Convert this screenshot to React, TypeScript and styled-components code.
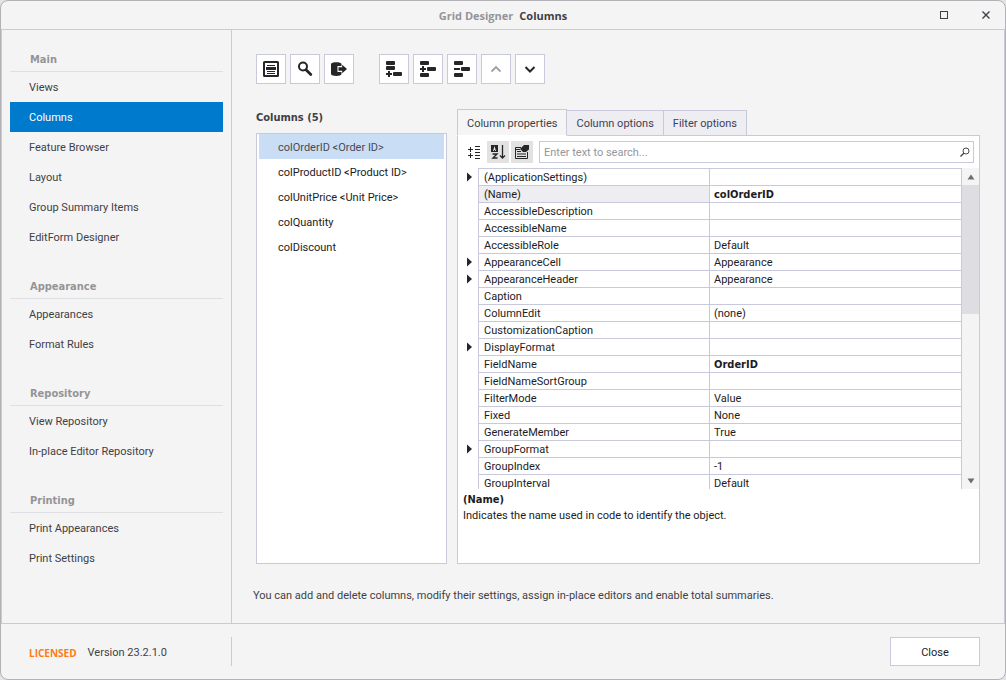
import React, { useState } from "react";
import styled, { createGlobalStyle, css } from "styled-components";

const line = "#c9c9dc";
const ink = "#262626";
const boldFont = `Tahoma, "DejaVu Sans Condensed", sans-serif`;

const GlobalStyle = createGlobalStyle`
  *, *::before, *::after { box-sizing: border-box; }
  body { margin: 0; background: #e4e4e4; }
  body, button, input, table { font: 11px/14px Tahoma, Roboto, sans-serif; color: #1c1c24; }
  ul { list-style: none; margin: 0; padding: 0; }
  h1, h2, h3, p { margin: 0; font-size: 11px; }
  h2, h3 { font-family: ${boldFont}; }
  button { padding: 0; cursor: pointer; }
`;

const Window = styled.div`
  display: flex;
  flex-direction: column;
  height: 100vh;
  min-height: 480px;
  background: #f4f4f4;
  border: 1px solid #b2b2b6;
  border-radius: 8px;
  overflow: hidden;
`;

const TitleBar = styled.header`
  display: grid;
  grid-template-columns: 1fr auto 1fr;
  align-items: center;
  height: 29px;
  border-bottom: 1px solid ${line};
`;

const Title = styled.h1`
  grid-column: 2;
  font: bold 11px/16px "Open Sans", sans-serif;
  color: #3f3f46;
  padding-top: 1px;
`;

const AppName = styled.span`
  color: #949498;
  margin-right: 6px;
`;

const WindowButtons = styled.div`
  display: flex;
  justify-content: flex-end;
  gap: 22px;
  padding-right: 9px;
`;

const WindowButton = styled.button`
  display: grid;
  place-items: center;
  width: 20px;
  height: 20px;
  border: 0;
  background: none;
  color: #3f3f46;
`;

const Body = styled.div`
  display: flex;
  flex: 1;
  min-height: 0;
  border: solid ${line};
  border-width: 0 1px;
`;

const Sidebar = styled.nav`
  flex: 0 0 230px;
  padding: 17px 8px 0;
  border-right: 1px solid ${line};
`;

const NavGroup = styled.section`
  & + & { margin-top: 22px; }
`;

const NavHeading = styled.h2`
  padding: 1px 20px 0;
  line-height: 23px;
  color: #949498;
  border-bottom: 1px solid #dfdfe4;
`;

const NavLink = styled.a<{ $active?: boolean }>`
  display: block;
  padding: 2px 19px 0;
  line-height: 28px;
  text-decoration: none;
  color: ${(p) => (p.$active ? "#fff" : "#3f3f46")};
  background: ${(p) => (p.$active ? "#007acc" : "none")};
`;

const Main = styled.main`
  display: flex;
  flex: 1;
  flex-direction: column;
  min-width: 0;
  padding: 24px 24px 20px;
`;

const Toolbar = styled.div`
  display: flex;
  gap: 25px;
`;

const ToolGroup = styled.div`
  display: flex;
  gap: 4px;
`;

const ToolButton = styled.button`
  display: grid;
  place-items: center;
  width: 30px;
  height: 30px;
  background: #fff;
  border: 1px solid ${line};
  color: ${ink};
  &:disabled { color: #a0a0a4; }
`;

const Workspace = styled.div`
  display: flex;
  flex: 1;
  gap: 10px;
  min-height: 0;
  margin-top: 25px;
`;

const ColumnsPane = styled.section`
  display: flex;
  flex: 0 0 191px;
  flex-direction: column;
`;

const PaneHeading = styled.h2`
  line-height: 16px;
  padding: 1px 0 7px;
  color: #3f3f46;
`;

const ColumnList = styled.ul`
  flex: 1;
  padding: 0 2px;
  background: #fff;
  border: 1px solid ${line};
`;

const ColumnItem = styled.button<{ $selected: boolean }>`
  display: block;
  width: 100%;
  height: 25px;
  padding: 2px 19px 0;
  border: 0;
  text-align: left;
  background: ${(p) => (p.$selected ? "#c9ddf4" : "none")};
  color: ${(p) => (p.$selected ? "#4a4a52" : "#1c1c24")};
`;

const PropertiesPane = styled.section`
  display: flex;
  flex: 1;
  flex-direction: column;
  min-width: 0;
`;

const Tabs = styled.div`
  display: flex;
  align-items: flex-end;
  margin-bottom: -1px;
`;

const Tab = styled.button<{ $active: boolean }>`
  position: relative;
  height: 26px;
  padding: 2px 9px 0;
  color: #3f3f56;
  background: #ededf2;
  border: 1px solid ${line};
  & + & { border-left-width: 0; }
  ${(p) =>
    p.$active &&
    css`
      height: 27px;
      background: #f5f5f5;
      border-bottom-color: #fff;
      color: #3f3f46;
    `}
`;

const Panel = styled.div`
  display: flex;
  flex: 1;
  flex-direction: column;
  min-height: 0;
  background: #fff;
  border: 1px solid ${line};
`;

const FilterBar = styled.div`
  display: flex;
  align-items: center;
  padding: 5px;
`;

const FilterButton = styled.button<{ $on?: boolean }>`
  display: grid;
  place-items: center;
  width: 22px;
  height: 22px;
  margin-right: 2px;
  border: 0;
  background: ${(p) => (p.$on ? "#e2e2e2" : "none")};
  color: ${ink};
`;

const SearchBox = styled.label`
  display: flex;
  flex: 1;
  align-items: center;
  height: 22px;
  margin-left: 4px;
  padding: 0 3px 0 4px;
  border: 1px solid ${line};
  color: #4a4a4a;
`;

const SearchInput = styled.input`
  flex: 1;
  min-width: 0;
  padding: 2px 0 0;
  border: 0;
  outline: 0;
  background: none;
  &::placeholder { color: #96969c; opacity: 1; }
`;

const GridArea = styled.div`
  display: flex;
  flex: 1;
  min-height: 0;
  overflow: hidden;
`;

const PropertyTable = styled.table`
  flex: 1;
  display: block;
  overflow: hidden;
  border-spacing: 0;
  tbody { display: block; }
`;

const PropertyRow = styled.tr`
  display: grid;
  grid-template-columns: 20px 231fr 252fr;
  height: 17px;
`;

const ExpandCell = styled.td`
  display: grid;
  place-items: center;
  padding: 0;
`;

const Expander = styled.button`
  display: grid;
  place-items: center;
  width: 14px;
  height: 14px;
  border: 0;
  background: none;
  color: ${ink};
`;

const NameCell = styled.th<{ $selected?: boolean }>`
  padding: 2px 0 0 5px;
  text-align: left;
  font-weight: normal;
  border: solid ${line};
  border-width: 1px 0 0 1px;
  background: ${(p) => (p.$selected ? "#ededf2" : "none")};
`;

const ValueCell = styled.td<{ $bold?: boolean }>`
  padding: 2px 0 0 4px;
  ${(p) => p.$bold && `font-family: ${boldFont}; font-weight: bold;`}
  border: solid ${line};
  border-width: 1px 0 0 1px;
`;

const ScrollBar = styled.div`
  display: flex;
  flex: 0 0 18px;
  flex-direction: column;
  background: #f4f4f4;
  border-left: 1px solid ${line};
`;

const ScrollArrow = styled.button`
  display: grid;
  place-items: center;
  height: 17px;
  border: 0;
  background: none;
  color: #6e6e72;
`;

const ScrollTrack = styled.div`
  flex: 1;
`;

const ScrollThumb = styled.div`
  height: 45%;
  background: #dddde2;
`;

const Description = styled.div`
  flex: 0 0 74px;
  padding: 4px 5px;
  h3 { line-height: 14px; margin-bottom: 2px; }
`;

const Hint = styled.p`
  margin: 25px 0 0 -3px;
  color: #3f3f46;
`;

const Footer = styled.footer`
  display: flex;
  align-items: center;
  flex: 0 0 56px;
  padding: 0 25px 0 1px;
  border-top: 1px solid ${line};
`;

const LicenseInfo = styled.div`
  display: flex;
  align-items: center;
  gap: 11px;
  flex: 0 0 230px;
  height: 29px;
  padding: 2px 0 0 27px;
  border-right: 1px solid ${line};
  color: #3f3f46;
`;

const Licensed = styled.strong`
  font: bold 10px/14px "Open Sans", sans-serif;
  color: #ff7a14;
`;

const CloseButton = styled.button`
  width: 90px;
  height: 29px;
  margin-left: auto;
  padding-top: 2px;
  background: #fff;
  border: 1px solid ${line};
`;

const Icon = ({ size = 16, children }: { size?: number; children: React.ReactNode }) => (
  <svg width={size} height={size} viewBox={`0 0 ${size} ${size}`} fill="currentColor" aria-hidden="true">
    {children}
  </svg>
);

const stroke = { fill: "none", stroke: "currentColor" };

const tools = [
  [
    {
      label: "Show field list",
      icon: (
        <>
          <rect x="1" y="1" width="14" height="14" strokeWidth="2" rx=".5" {...stroke} />
          <path d="M4 4h8v1H4zM3 6h10v3H3zM4 10h8v1H4zM4 12h8v1H4z" />
        </>
      ),
    },
    {
      label: "Search",
      icon: (
        <>
          <circle cx="6" cy="5.5" r="4" strokeWidth="2" {...stroke} />
          <path d="M9 8.7l4.800 4.800" strokeWidth="2.800" strokeLinecap="round" {...stroke} />
        </>
      ),
    },
    {
      label: "Retrieve fields",
      icon: (
        <>
          <path d="M0 3C0 .5 10.500 .5 10.500 3V5H6.500v6h4v2C10.500 15.500 0 15.500 0 13z" />
          <path d="M7.500 6.300h3.700V3.800L16 8l-4.800 4.200V9.700H7.500z" />
        </>
      ),
    },
  ],
  [
    {
      label: "Add column",
      icon: (
        <>
          <rect width="9" height="4" rx="1" />
          <rect y="5" width="9" height="4" rx="1" />
          <rect x="7" y="11" width="9" height="4" rx="1" />
          <path d="M0 12h2v-2h2v2h2v2H4v2H2v-2H0z" />
        </>
      ),
    },
    {
      label: "Insert column",
      icon: (
        <>
          <rect width="9" height="4" rx="1" />
          <rect x="7" y="6" width="9" height="4" rx="1" />
          <rect y="12" width="9" height="4" rx="1" />
          <path d="M0 7h2V5h2v2h2v2H4v2H2V9H0z" />
        </>
      ),
    },
    {
      label: "Remove column",
      icon: (
        <>
          <rect width="9" height="4" rx="1" />
          <rect x="7" y="6" width="9" height="4" rx="1" />
          <rect y="12" width="9" height="4" rx="1" />
          <path d="M0 7h6v2H0z" />
        </>
      ),
    },
    { label: "Move up", disabled: true, icon: <path d="M3.500 10.500L8 6l4.500 4.500" strokeWidth="1.800" {...stroke} /> },
    { label: "Move down", icon: <path d="M3.500 6L8 10.500L12.500 6" strokeWidth="2" {...stroke} /> },
  ],
];

const nav = [
  { title: "Main", items: ["Views", "Columns", "Feature Browser", "Layout", "Group Summary Items", "EditForm Designer"] },
  { title: "Appearance", items: ["Appearances", "Format Rules"] },
  { title: "Repository", items: ["View Repository", "In-place Editor Repository"] },
  { title: "Printing", items: ["Print Appearances", "Print Settings"] },
];

const columns = ["colOrderID <Order ID>", "colProductID <Product ID>", "colUnitPrice <Unit Price>", "colQuantity", "colDiscount"];

const tabs = ["Column properties", "Column options", "Filter options"];

type Property = { name: string; value?: string; bold?: boolean; expandable?: boolean };

const properties: Property[] = [
  { name: "(ApplicationSettings)", expandable: true },
  { name: "(Name)", value: "colOrderID", bold: true },
  { name: "AccessibleDescription" },
  { name: "AccessibleName" },
  { name: "AccessibleRole", value: "Default" },
  { name: "AppearanceCell", value: "Appearance", expandable: true },
  { name: "AppearanceHeader", value: "Appearance", expandable: true },
  { name: "Caption" },
  { name: "ColumnEdit", value: "(none)" },
  { name: "CustomizationCaption" },
  { name: "DisplayFormat", expandable: true },
  { name: "FieldName", value: "OrderID", bold: true },
  { name: "FieldNameSortGroup" },
  { name: "FilterMode", value: "Value" },
  { name: "Fixed", value: "None" },
  { name: "GenerateMember", value: "True" },
  { name: "GroupFormat", expandable: true },
  { name: "GroupIndex", value: "-1" },
  { name: "GroupInterval", value: "Default" },
];

export default function App() {
  const [column, setColumn] = useState(0);
  const [tab, setTab] = useState(0);

  return (
    <>
      <GlobalStyle />
      <Window>
        <TitleBar>
          <Title>
            <AppName>Grid Designer</AppName>Columns
          </Title>
          <WindowButtons>
            <WindowButton aria-label="Maximize">
              <Icon size={10}>
                <rect x="1.500" y="1.500" width="7" height="7" {...stroke} />
              </Icon>
            </WindowButton>
            <WindowButton aria-label="Close window">
              <Icon size={10}>
                <path d="M1.500 1.500l7 7M8.500 1.500l-7 7" strokeWidth="1.400" {...stroke} />
              </Icon>
            </WindowButton>
          </WindowButtons>
        </TitleBar>

        <Body>
          <Sidebar>
            {nav.map((group) => (
              <NavGroup key={group.title}>
                <NavHeading>{group.title}</NavHeading>
                <ul>
                  {group.items.map((item) => (
                    <li key={item}>
                      <NavLink href="#" $active={item === "Columns"}>{item}</NavLink>
                    </li>
                  ))}
                </ul>
              </NavGroup>
            ))}
          </Sidebar>

          <Main>
            <Toolbar>
              {tools.map((group, i) => (
                <ToolGroup key={i}>
                  {group.map((tool) => (
                    <ToolButton key={tool.label} aria-label={tool.label} disabled={"disabled" in tool}>
                      <Icon>{tool.icon}</Icon>
                    </ToolButton>
                  ))}
                </ToolGroup>
              ))}
            </Toolbar>

            <Workspace>
              <ColumnsPane>
                <PaneHeading>Columns (5)</PaneHeading>
                <ColumnList>
                  {columns.map((name, i) => (
                    <li key={name}>
                      <ColumnItem $selected={i === column} onClick={() => setColumn(i)}>{name}</ColumnItem>
                    </li>
                  ))}
                </ColumnList>
              </ColumnsPane>

              <PropertiesPane>
                <Tabs role="tablist">
                  {tabs.map((name, i) => (
                    <Tab key={name} role="tab" aria-selected={i === tab} $active={i === tab} onClick={() => setTab(i)}>
                      {name}
                    </Tab>
                  ))}
                </Tabs>
                <Panel>
                  <FilterBar>
                    <FilterButton aria-label="Categorized">
                      <Icon>
                        <path d="M2 5h5v1H2zM4 3h1v5H4zM2 11h5v1H2zM4 9h1v5H4zM9 2h5v1H9zM9 5h5v1H9zM9 8h5v1H9zM9 11h5v1H9zM9 14h5v1H9z" />
                      </Icon>
                    </FilterButton>
                    <FilterButton aria-label="Alphabetical" $on>
                      <Icon>
                        <path fillRule="evenodd" d="M1 1h7v7H1zM3 7l1.500-5L6 7H5V6H4v1z" />
                        <path d="M2.500 10h4.500L3 14h4.500" strokeWidth="1.400" {...stroke} />
                        <path d="M12.500 1v13M10 11.500l2.500 2.500 2.500-2.500" strokeWidth="1.300" {...stroke} />
                      </Icon>
                    </FilterButton>
                    <FilterButton aria-label="Property pages" $on>
                      <Icon>
                        <path d="M7 3.500H1.500v11h12V8" {...stroke} />
                        <path d="M3 7h4v1H3zM3 9.500h9v1H3zM3 12h9v1H3zM2 5h4v1H2z" />
                        <path d="M6 5l4-4h5v4.500L12 8H9L7.500 6.500z" />
                      </Icon>
                    </FilterButton>
                    <SearchBox>
                      <SearchInput type="text" aria-label="Search properties" placeholder="Enter text to search..." />
                      <Icon size={10}>
                        <circle cx="6" cy="4" r="3" {...stroke} />
                        <path d="M4 6L.5 9.500" strokeWidth="1.400" {...stroke} />
                      </Icon>
                    </SearchBox>
                  </FilterBar>

                  <GridArea>
                    <PropertyTable>
                      <tbody>
                        {properties.map((p) => (
                          <PropertyRow key={p.name}>
                            <ExpandCell>
                              {p.expandable && (
                                <Expander aria-label={`Expand ${p.name}`}>
                                  <Icon size={10}>
                                    <path d="M4 .5l5 4.500-5 4.500z" />
                                  </Icon>
                                </Expander>
                              )}
                            </ExpandCell>
                            <NameCell scope="row" $selected={p.name === "(Name)"}>{p.name}</NameCell>
                            <ValueCell $bold={p.bold}>{p.value}</ValueCell>
                          </PropertyRow>
                        ))}
                      </tbody>
                    </PropertyTable>
                    <ScrollBar>
                      <ScrollArrow aria-label="Scroll up">
                        <Icon size={8}>
                          <path d="M4 1.500L7.500 6.500h-7z" />
                        </Icon>
                      </ScrollArrow>
                      <ScrollTrack>
                        <ScrollThumb />
                      </ScrollTrack>
                      <ScrollArrow aria-label="Scroll down">
                        <Icon size={8}>
                          <path d="M4 6.500L.5 1.500h7z" />
                        </Icon>
                      </ScrollArrow>
                    </ScrollBar>
                  </GridArea>

                  <Description>
                    <h3>(Name)</h3>
                    <p>Indicates the name used in code to identify the object.</p>
                  </Description>
                </Panel>
              </PropertiesPane>
            </Workspace>

            <Hint>You can add and delete columns, modify their settings, assign in-place editors and enable total summaries.</Hint>
          </Main>
        </Body>

        <Footer>
          <LicenseInfo>
            <Licensed>LICENSED</Licensed>
            <span>Version 23.2.1.0</span>
          </LicenseInfo>
          <CloseButton>Close</CloseButton>
        </Footer>
      </Window>
    </>
  );
}
